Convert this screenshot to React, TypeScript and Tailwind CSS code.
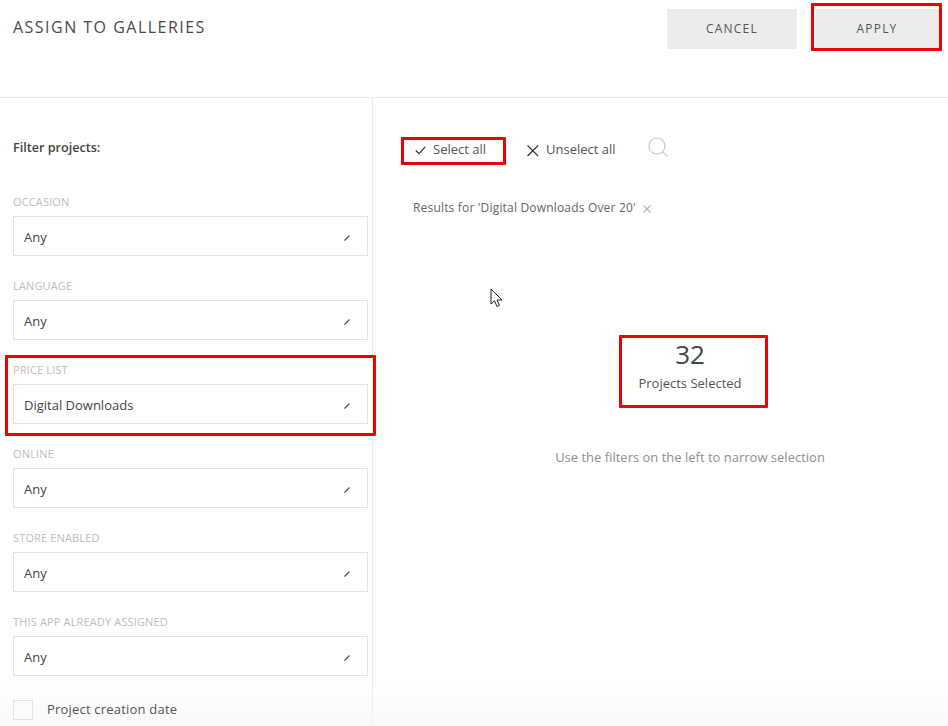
const FIELDS = [
  { label: "OCCASION", value: "Any" },
  { label: "LANGUAGE", value: "Any" },
  { label: "PRICE LIST", value: "Digital Downloads", marked: true },
  { label: "ONLINE", value: "Any" },
  { label: "STORE ENABLED", value: "Any" },
  { label: "THIS APP ALREADY ASSIGNED", value: "Any" },
];

const FilterField = ({ label, value, marked }: { label: string; value: string; marked?: boolean }) => (
  <div className="relative h-[84px]">
    <div className="flex h-[30px] items-center text-[11px] leading-none tracking-[0.15px] text-[#bdbdbd]">{label}</div>
    <div className="flex h-[40px] items-center justify-between border border-[#e3e3e3] bg-white pr-[17px] pl-[10px] text-[13px] text-[#444444]">
      <span className="mt-[3px]">{value}</span>
      <svg className="mt-[3px]" width="6" height="6" viewBox="0 0 6 6" aria-hidden="true">
        <path d="M0.5 5.5 L5.5 0.5" stroke="#555555" strokeWidth="1.2" />
      </svg>
    </div>
    {marked && (
      <div className="absolute top-[1px] -right-[8px] -left-[8px] h-[81px] rounded-[1px] border-[3px] border-[#f00000]" />
    )}
  </div>
);

const App = () => (
  <div className="relative h-[726px] w-[948px] overflow-hidden bg-white font-['Open_Sans',sans-serif]">
    <header className="flex h-[98px] justify-between border-b border-[#ececec] pl-[13px]">
      <h1 className="mt-[17px] text-[16px] leading-[20px] font-normal tracking-[1.48px] text-[#4a4a4a]">
        ASSIGN TO GALLERIES
      </h1>
      <div className="flex items-start pt-[9px] pr-[9px]">
        <button type="button" className="h-[40px] w-[130px] bg-[#ececec] text-[12px] tracking-[1.2px] text-[#555555]">
          CANCEL
        </button>
        <div className="relative ml-[18px]">
          <button type="button" className="h-[40px] w-[124px] bg-[#ececec] text-[12px] tracking-[1.2px] text-[#555555]">
            APPLY
          </button>
          <div className="absolute -top-[6px] -right-[3px] -bottom-[2px] -left-[4px] rounded-[1px] border-[3px] border-[#f00000]" />
        </div>
      </div>
    </header>

    <div className="flex h-[628px]">
      <aside className="w-[373px] shrink-0 border-r border-[#ececec] pr-[4px] pl-[13px]">
        <div className="flex h-[88px] items-center pt-[12px] text-[12.6px] font-semibold text-[#444444]">Filter projects:</div>
        {FIELDS.map((f) => (
          <FilterField key={f.label} label={f.label} value={f.value} marked={f.marked} />
        ))}
        <div className="relative z-10 mt-[10px] flex items-center">
          <span className="h-[20px] w-[20px] border border-[#e3e3e3]" />
          <span className="ml-[14px] text-[13px] tracking-[0.2px] text-[#555555]">Project creation date</span>
        </div>
      </aside>

      <main className="relative flex-1 pl-[28px]">
        <div className="mt-[39px] flex h-[28px] items-center text-[13px] text-[#555555]">
          <div className="relative flex h-[28px] w-[105px] items-center pb-[2px] pl-[14px]">
            <svg width="11" height="9" viewBox="0 0 11 9" fill="none" aria-hidden="true">
              <path d="M0.8 4.5 L4 7.7 L10.2 0.8" stroke="#333333" strokeWidth="1.2" />
            </svg>
            <span className="ml-[7px]">Select all</span>
            <div className="absolute inset-0 rounded-[1px] border-[3px] border-[#f00000]" />
          </div>
          <svg className="mb-[2px] ml-[20px]" width="13" height="13" viewBox="0 0 13 13" fill="none" aria-hidden="true">
            <path d="M1.5 1.5 L12 12 M12 1.5 L1.5 12" stroke="#333333" strokeWidth="1.2" />
          </svg>
          <span className="mb-[2px] ml-[7px]">Unselect all</span>
          <svg className="mb-[8px] ml-[32px]" width="21" height="21" viewBox="0 0 21 21" fill="none" aria-hidden="true">
            <circle cx="9" cy="9" r="8" stroke="#c9c9c9" strokeWidth="1.2" />
            <path d="M14.8 14.8 L19.5 19.5" stroke="#c9c9c9" strokeWidth="1.2" />
          </svg>
        </div>

        <div className="mt-[33px] flex h-[20px] items-center pl-[12px] text-[12px] tracking-[0.18px] text-[#666666]">
          <span>Results for 'Digital Downloads Over 20'</span>
          <svg className="mt-[2px] ml-[7px]" width="8" height="8" viewBox="0 0 8 8" fill="none" aria-hidden="true">
            <path d="M0.5 0.5 L7.5 7.5 M7.5 0.5 L0.5 7.5" stroke="#b5b5b5" strokeWidth="1.1" />
          </svg>
        </div>

        <div className="mt-[117px] flex flex-col items-center pl-[31px]">
          <div className="relative flex h-[73px] w-[149px] flex-col items-center">
            <span className="mt-[2px] text-[26px] leading-[34px] text-[#444444]">32</span>
            <span className="mt-[2px] text-[13px] leading-[20px] text-[#555555]">Projects Selected</span>
            <div className="absolute inset-y-0 -right-[3px] left-[3px] rounded-[1px] border-[3px] border-[#f00000]" />
          </div>
          <p className="mt-[39px] text-[13px] leading-[20px] text-[#8f8f8f]">Use the filters on the left to narrow selection</p>
        </div>

        <svg className="absolute top-[190px] left-[117px]" width="13" height="20" viewBox="0 0 13 20" aria-hidden="true">
          <path d="M1 1 L1 16 L4.5 12.8 L7 18.5 L9.5 17.3 L7 12 L12 12 Z" fill="#ffffff" stroke="#222222" strokeWidth="1" />
        </svg>
      </main>
    </div>

    <div className="pointer-events-none absolute right-0 bottom-0 left-0 h-[46px] bg-gradient-to-b from-white/0 to-[#f6f6f6]/60" />
  </div>
);

export default App;
